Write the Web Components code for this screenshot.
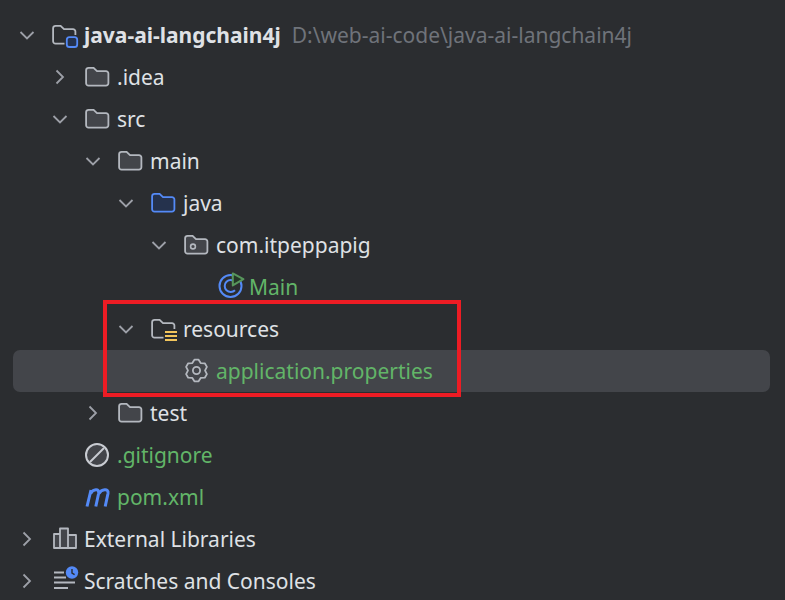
<!DOCTYPE html>
<html>
<head>
<meta charset="utf-8">
<title>Project tree</title>
<style>
  html, body { margin: 0; background: #2b2d30; }
</style>
</head>
<body>
<project-tree>
  <tree-row depth="0" arrow="down" icon="project" bold hint="D:\web-ai-code\java-ai-langchain4j">java-ai-langchain4j</tree-row>
  <tree-row depth="1" arrow="right" icon="folder">.idea</tree-row>
  <tree-row depth="1" arrow="down" icon="folder">src</tree-row>
  <tree-row depth="2" arrow="down" icon="folder">main</tree-row>
  <tree-row depth="3" arrow="down" icon="source">java</tree-row>
  <tree-row depth="4" arrow="down" icon="package">com.itpeppapig</tree-row>
  <tree-row depth="5" icon="main" green>Main</tree-row>
  <tree-row depth="3" arrow="down" icon="resources">resources</tree-row>
  <tree-row depth="4" icon="gear" green selected>application.properties</tree-row>
  <tree-row depth="2" arrow="right" icon="folder">test</tree-row>
  <tree-row depth="1" icon="ignore" green>.gitignore</tree-row>
  <tree-row depth="1" icon="maven" green>pom.xml</tree-row>
  <tree-row depth="0" arrow="right" icon="libraries">External Libraries</tree-row>
  <tree-row depth="0" arrow="right" icon="scratches">Scratches and Consoles</tree-row>
</project-tree>

<script>
const FOLDER = "M3.5 2.8H8.6L12 6.2H21a2.4 2.4 0 0 1 2.4 2.4V18.2a2.4 2.4 0 0 1-2.4 2.4H3.5a2.4 2.4 0 0 1-2.4-2.4V5.2a2.4 2.4 0 0 1 2.4-2.4Z";

function gearPoints() {
  const pts = [];
  for (let i = 0; i < 6; i++) {
    const a = (i * 60 - 90) * Math.PI / 180;
    [[-29, 8.6], [-11, 11], [11, 11], [29, 8.6]].forEach(([d, r]) => {
      const b = a + d * Math.PI / 180;
      pts.push((12.5 + r * Math.cos(b)).toFixed(2) + "," + (11.5 + r * Math.sin(b)).toFixed(2));
    });
  }
  return pts.join(" ");
}

const ICONS = {
  folder: `<path d="${FOLDER}" fill="#43454a" stroke="#b4b8bf" stroke-width="1.8"/>`,
  source: `<path d="${FOLDER}" fill="#25324d" stroke="#548af7" stroke-width="1.8"/>`,
  package: `<path d="${FOLDER}" fill="#43454a" stroke="#b4b8bf" stroke-width="1.8"/>
    <circle cx="9" cy="13.5" r="2.4" fill="none" stroke="#b4b8bf" stroke-width="1.6"/>`,
  project: `<path d="${FOLDER}" fill="none" stroke="#b4b8bf" stroke-width="1.8"/>
    <rect x="12.5" y="12" width="15" height="14" fill="#2b2d30"/>
    <rect x="14.8" y="14.2" width="10.4" height="9.8" rx="2.6" fill="#25324d" stroke="#548af7" stroke-width="1.8"/>`,
  resources: `<path d="${FOLDER}" fill="none" stroke="#b4b8bf" stroke-width="1.8"/>
    <rect x="12.5" y="12" width="15" height="14" fill="#2b2d30"/>
    <path d="M14 15H26M14 19H26M14 23H26" stroke="#f2c55c" stroke-width="2"/>`,
  main: `<circle cx="13.5" cy="11" r="11" fill="none" stroke="#548af7" stroke-width="2"/>
    <path d="M18 15.2A6 6 0 1 1 18 6.8" fill="none" stroke="#548af7" stroke-width="2"/>
    <path d="M15.8 -1.6L26.4 4.2L15.8 10.4Z" fill="#253627" stroke="#57965c" stroke-width="2" stroke-linejoin="round"/>`,
  gear: `<polygon points="${gearPoints()}" fill="none" stroke="#b4b8bf" stroke-width="1.8" stroke-linejoin="round"/>
    <circle cx="12.5" cy="11.5" r="3.6" fill="none" stroke="#b4b8bf" stroke-width="1.8"/>`,
  ignore: `<circle cx="12" cy="12" r="11" fill="#43454a" stroke="#c9ccd2" stroke-width="2"/>
    <path d="M5 19L19 5" stroke="#c9ccd2" stroke-width="2"/>`,
  maven: `<path d="M2 21.5L6 5M5.6 8.5C8 4 14.6 2.8 13.6 8.5L10.8 21.5M14 8.5C16.4 4 24 2.8 23 8.5L20.2 21.5" fill="none" stroke="#548af7" stroke-width="3"/>`,
  libraries: `<path d="M2 7H8V21H2ZM8 1.5H16V21H8ZM16 8H24V21H16Z" fill="#43454a" stroke="#b4b8bf" stroke-width="1.8" stroke-linejoin="round"/>`,
  scratches: `<path d="M2 3.5H12M2 8.5H14M2 13.5H23M2 19H16" stroke="#b4b8bf" stroke-width="1.8"/>
    <circle cx="20" cy="3.5" r="6.2" fill="#548af7"/>
    <path d="M20 0V4L22.6 5.6" fill="none" stroke="#2b2d30" stroke-width="1.4"/>`
};

const ARROWS = {
  down: `<path d="M2.5 6L9 12.5L15.5 6" fill="none" stroke="#9da0a8" stroke-width="1.8"/>`,
  right: `<path d="M5.5 2.5L12 9L5.5 15.5" fill="none" stroke="#9da0a8" stroke-width="1.8"/>`
};

class ProjectTree extends HTMLElement {
  constructor() {
    super();
    this.attachShadow({ mode: "open" });
    this.shadowRoot.innerHTML = `
      <style>
        :host {
          display: block;
          position: relative;
          width: 785px;
          height: 600px;
          box-sizing: border-box;
          padding: 14px 15px 0 13px;
          overflow: hidden;
          background: #2b2d30;
          color: #dfe1e5;
          font-family: "Noto Sans", sans-serif;
          font-size: 21px;
        }
        .mark {
          position: absolute;
          left: 103px;
          top: 300px;
          width: 350px;
          height: 89px;
          border: 4.5px solid #ed1c24;
          pointer-events: none;
        }
      </style>
      <slot></slot>
      <div class="mark"></div>
    `;
  }
}

class TreeRow extends HTMLElement {
  constructor() {
    super();
    this.attachShadow({ mode: "open" });
    this.shadowRoot.innerHTML = `
      <style>
        :host {
          display: flex;
          align-items: center;
          height: 42px;
          border-radius: 7px;
          white-space: nowrap;
        }
        :host([selected]) { background: #43454a; }
        :host([green]) .label { color: #62b568; }
        :host([bold]) .label { font-weight: 700; }
        svg { display: block; overflow: visible; flex: none; }
        .arrow { width: 18px; height: 18px; margin-right: 16px; }
        .icon { width: 24px; height: 24px; margin-right: 8px; }
        .hint { margin-left: 11px; color: #6f737a; }
      </style>
      <svg class="arrow" viewBox="0 0 18 18"></svg>
      <svg class="icon" viewBox="0 0 24 24"></svg>
      <span class="label"><slot></slot></span>
      <span class="hint"></span>
    `;
  }

  connectedCallback() {
    const depth = Number(this.getAttribute("depth") || 0);
    this.style.paddingLeft = (5 + depth * 33) + "px";
    this.shadowRoot.querySelector(".arrow").innerHTML = ARROWS[this.getAttribute("arrow")] || "";
    this.shadowRoot.querySelector(".icon").innerHTML = ICONS[this.getAttribute("icon")] || "";
    this.shadowRoot.querySelector(".hint").textContent = this.getAttribute("hint") || "";
  }
}

customElements.define("project-tree", ProjectTree);
customElements.define("tree-row", TreeRow);
</script>
</body>
</html>
